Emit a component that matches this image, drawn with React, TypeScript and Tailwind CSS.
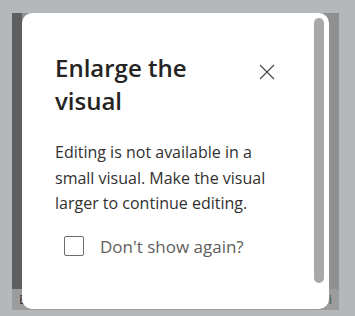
export default function App() {
  return (
    <div className="relative h-[316px] w-[355px] overflow-hidden bg-[#b5b8ba]" style={{ fontFamily: '"Open Sans", "Noto Sans", sans-serif' }}>
      {/* visual behind the dialog */}
      <div className="absolute left-[12px] top-[13px] flex h-[297px] w-[327px] flex-col">
        <div className="flex flex-1">
          <div className="w-[10px] bg-[#5f5f5f]" />
          <div className="flex-1 bg-[#8f8f8f]" />
        </div>
        <div className="flex h-[21px] items-center justify-between bg-[#9c9c9c] px-[7px] text-[13px] text-[#333]">
          <span>E</span>
          <span className="text-[#2f5f5f]">i</span>
        </div>
      </div>

      {/* dialog */}
      <div className="absolute left-[22px] top-[13px] flex h-[296px] w-[307px] rounded-[10px] bg-white">
        <div className="flex flex-1 flex-col pl-[33px] pr-[12px] pt-[38px]">
          <div className="flex items-start justify-between">
            <h2 className="w-[175px] text-[24px] font-semibold leading-[33px] text-[#252423]">Enlarge the visual</h2>
            <button className="mr-[27px] mt-[13px] text-[#444]">
              <svg width="16" height="16" viewBox="0 0 16 16" fill="none" stroke="currentColor" strokeWidth="1.1">
                <path d="M1 1 L15 15 M15 1 L1 15" />
              </svg>
            </button>
          </div>
          <p className="mt-[23px] w-[232px] text-[16px] leading-[25.5px] text-[#323130]">
            Editing is not available in a small visual. Make the visual larger to continue editing.
          </p>
          <label className="ml-[9px] mt-[17px] flex items-center gap-[16px] text-[17px] text-[#605e5c]">
            <span className="h-[20px] w-[20px] rounded-[2px] border border-[#6b6b6b]" />
            Don't show again?
          </label>
        </div>
        <div className="mr-[5px] mt-[5px] h-[265px] w-[10px] rounded-full bg-[#a8a8a8]" />
      </div>
    </div>
  );
}
